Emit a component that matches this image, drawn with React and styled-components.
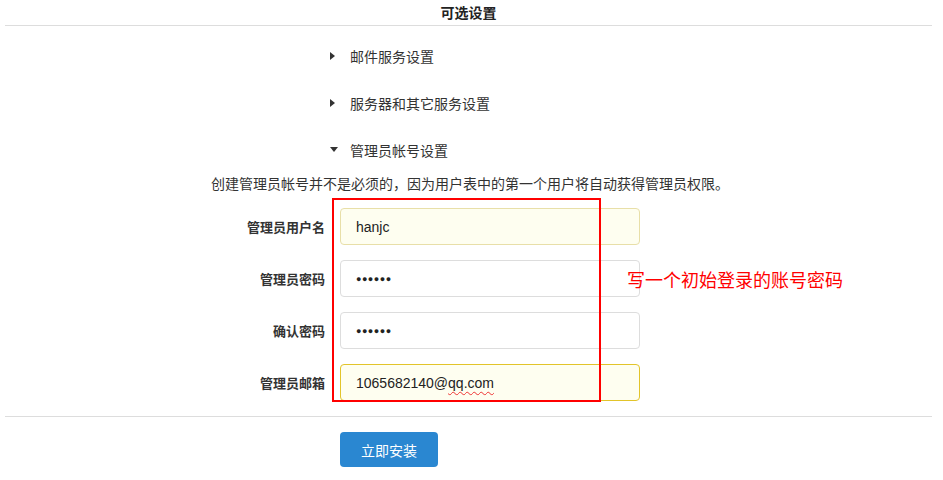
import React from "react";
import styled, { createGlobalStyle } from "styled-components";

const GlobalStyle = createGlobalStyle`
    html, body {
        margin: 0;
        padding: 0;
        background: #fff;
    }
    body {
        font-family: "Liberation Sans", "Noto Sans CJK SC", sans-serif;
        color: #333;
    }
`;

const Page = styled.div`
    width: 927px;
    margin-left: 5px;
`;

const Title = styled.div`
    height: 25px;
    line-height: 26px;
    text-align: center;
    font-size: 14px;
    font-weight: bold;
    color: #222;
    border-bottom: 1px solid #ddd;
`;

const Sections = styled.ul`
    list-style: none;
    margin: 6px 0 0;
    padding: 0 0 0 325px;
`;

const Section = styled.li`
    display: flex;
    align-items: center;
    height: 47px;
    font-size: 14px;
    color: #333;
`;

const Arrow = styled.span`
    width: 0;
    height: 0;
    border-style: solid;
    border-color: transparent;
    ${(p) =>
        p.$open
            ? `border-width: 5px 4px 0 4px; border-top-color: #333; margin-right: 12px;`
            : `border-width: 4px 0 4px 5px; border-left-color: #333; margin-right: 15px;`}
`;

const Note = styled.p`
    margin: 0;
    height: 22px;
    line-height: 22px;
    font-size: 14px;
    text-align: center;
    color: #333;
    padding-left: 3px;
`;

const FormWrap = styled.div`
    position: relative;
    margin-top: 13px;
`;

const FormGrid = styled.div`
    display: grid;
    grid-template-columns: 320px 300px;
    column-gap: 15px;
    row-gap: 15px;
    align-items: center;
`;

const Label = styled.label`
    text-align: right;
    font-size: 13px;
    font-weight: bold;
    color: #333;
`;

const Field = styled.div`
    box-sizing: border-box;
    height: 37px;
    padding: 0 15px;
    display: flex;
    align-items: center;
    font-size: 14px;
    color: #222;
    border-radius: 4px;
    background: ${(p) => (p.$filled ? "#fefef0" : "#fff")};
    border: 1px solid ${(p) => p.$border || "#ddd"};
`;

const Dots = styled.span`
    font-size: 9px;
    font-weight: bold;
    letter-spacing: 0.5px;
`;

const Misspelled = styled.span`
    text-decoration: underline wavy #e33;
    text-decoration-thickness: 1px;
    text-underline-offset: 3px;
`;

const Marker = styled.div`
    position: absolute;
    left: 327px;
    top: -10px;
    width: 265px;
    height: 200px;
    border: 2px solid #f00;
    pointer-events: none;
`;

const Remark = styled.div`
    position: absolute;
    left: 622px;
    top: 58px;
    font-size: 18px;
    color: #f00;
    white-space: nowrap;
`;

const Footer = styled.div`
    margin-top: 15px;
    border-top: 1px solid #ddd;
    padding: 15px 0 0 335px;
`;

const Button = styled.button`
    width: 98px;
    height: 35px;
    border: none;
    border-radius: 4px;
    background: #2a87d1;
    color: #fff;
    font-family: inherit;
    font-size: 14px;
    cursor: pointer;
`;

function App() {
    const sections = [
        { name: "邮件服务设置", open: false },
        { name: "服务器和其它服务设置", open: false },
        { name: "管理员帐号设置", open: true },
    ];
    return (
        <Page>
            <GlobalStyle />
            <Title>可选设置</Title>
            <Sections>
                {sections.map((s) => (
                    <Section key={s.name}>
                        <Arrow $open={s.open} />
                        {s.name}
                    </Section>
                ))}
            </Sections>
            <Note>创建管理员帐号并不是必须的，因为用户表中的第一个用户将自动获得管理员权限。</Note>
            <FormWrap>
                <FormGrid>
                    <Label>管理员用户名</Label>
                    <Field $filled $border="#e8dfa8">hanjc</Field>
                    <Label>管理员密码</Label>
                    <Field><Dots>●●●●●●</Dots></Field>
                    <Label>确认密码</Label>
                    <Field><Dots>●●●●●●</Dots></Field>
                    <Label>管理员邮箱</Label>
                    <Field $filled $border="#e2c42a">
                        1065682140@<Misspelled>qq.com</Misspelled>
                    </Field>
                </FormGrid>
                <Marker />
                <Remark>写一个初始登录的账号密码</Remark>
            </FormWrap>
            <Footer>
                <Button>立即安装</Button>
            </Footer>
        </Page>
    );
}

export default App;
